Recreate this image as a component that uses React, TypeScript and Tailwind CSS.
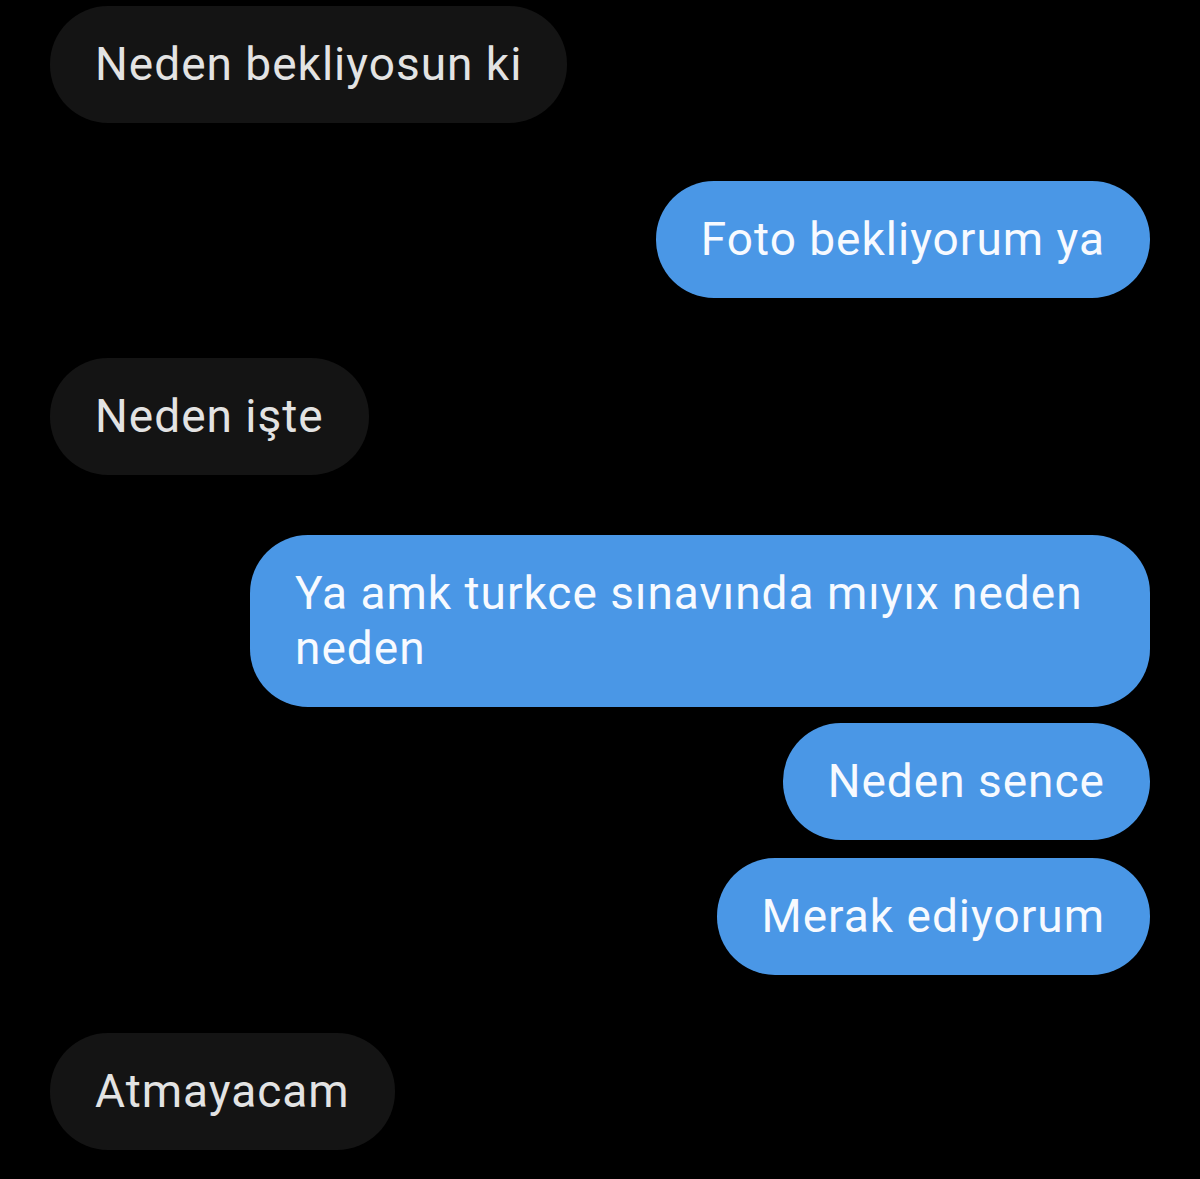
import React from "react";

type Msg = { text: string; mine: boolean; gap: number };

const messages: Msg[] = [
  { text: "Neden bekliyosun ki", mine: false, gap: 6 },
  { text: "Foto bekliyorum ya", mine: true, gap: 58 },
  { text: "Neden işte", mine: false, gap: 60 },
  { text: "Ya amk turkce sınavında mıyıx neden neden", mine: true, gap: 60 },
  { text: "Neden sence", mine: true, gap: 16 },
  { text: "Merak ediyorum", mine: true, gap: 18 },
  { text: "Atmayacam", mine: false, gap: 58 },
];

const gapClass: Record<number, string> = {
  6: "mt-[6px]",
  16: "mt-[16px]",
  18: "mt-[18px]",
  58: "mt-[58px]",
  60: "mt-[60px]",
};

export default function App() {
  return (
    <main className="min-h-[1179px] w-[1200px] bg-black flex flex-col px-[50px] font-['Roboto',sans-serif]">
      {messages.map((m, i) => (
        <div
          key={i}
          className={`${gapClass[m.gap]} flex ${m.mine ? "justify-end" : "justify-start"}`}
        >
          <div
            className={
              m.mine
                ? "max-w-[900px] rounded-[58px] bg-[#4a97e6] text-[#f7faff] px-[45px] py-[31px] text-[46px] leading-[55px] tracking-[1px]"
                : "max-w-[900px] rounded-[58px] bg-[#141414] text-[#e3e3e3] px-[45px] py-[31px] text-[46px] leading-[55px] tracking-[1px]"
            }
          >
            {m.text}
          </div>
        </div>
      ))}
    </main>
  );
}
